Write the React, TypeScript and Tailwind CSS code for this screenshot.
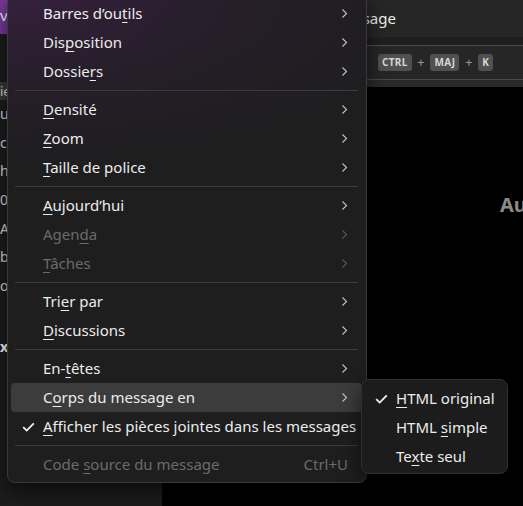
import clsx from "clsx";

type ItemProps = {
  label: string;
  k: number;
  disabled?: boolean;
  sub?: boolean;
  shortcut?: string;
  check?: boolean;
  active?: boolean;
};

function Chevron({ dim }: { dim?: boolean }) {
  return (
    <svg width="7" height="11" viewBox="0 0 7 11" fill="none" className="shrink-0">
      <path d="M1.5 1.5l4 4-4 4" stroke={dim ? "#595959" : "#c4c4c4"} strokeWidth="1.1" />
    </svg>
  );
}

function Check() {
  return (
    <svg width="13" height="10" viewBox="0 0 13 10" fill="none">
      <path d="M1.2 5.2l3.5 3.4L11.8 1.3" stroke="#f2f2f2" strokeWidth="1.8" />
    </svg>
  );
}

// underline the access key letter
function Label({ text, k }: { text: string; k: number }) {
  return (
    <span className="whitespace-nowrap">
      {text.slice(0, k)}
      <span className="underline decoration-1 underline-offset-[3px]">{text[k]}</span>
      {text.slice(k + 1)}
    </span>
  );
}

function Item({ label, k, disabled, sub, shortcut, check, active }: ItemProps) {
  return (
    <div
      className={clsx(
        "flex h-[29px] items-center rounded-[4px] pl-[11px] pr-[14px]",
        active && "bg-[#3c3c3c]",
        disabled ? "text-[#6b6b6b]" : "text-[#ececec]"
      )}
    >
      <div className="flex w-[21px] shrink-0 items-center">{check && <Check />}</div>
      <div className="flex-1">
        <Label text={label} k={k} />
      </div>
      {sub && <Chevron dim={disabled} />}
      {shortcut && <span className="text-[#6b6b6b]">{shortcut}</span>}
    </div>
  );
}

function Sep() {
  return <div className="mx-[4px] my-[4px] h-px bg-[#3b3b3b]" />;
}

function Key({ children }: { children: string }) {
  return (
    <span className="flex h-[17px] items-center rounded-[3px] bg-[#505050] px-[4px] text-[10px] font-bold tracking-[0.3px] text-[#d6d6d6]">
      {children}
    </span>
  );
}

export default function App() {
  const letters = ["u", "c", "h", "0", "A", "b", "oc"];
  return (
    <div className="relative h-[506px] w-[523px] overflow-hidden bg-black font-['Noto_Sans',sans-serif] text-[15px]">
      <div className="flex h-full">
        <aside className="flex w-[162px] shrink-0 flex-col bg-[#1c1c1c] text-[#d8d8d8]">
          <div className="h-[34px] bg-[#773b9d] text-[15px] leading-[30px] text-white">v</div>
          <div className="h-[48px]" />
          <div className="h-[18px] border-t border-[#3a3a3a] bg-[#393939] text-[13px] leading-[17px] text-[#e0dccf]">
            ie
          </div>
          {letters.map((l) => (
            <div key={l} className="h-[28.7px] text-[14px] leading-[28.7px]">
              {l}
            </div>
          ))}
          <div className="mt-[35px] text-[14px] font-bold text-white">x</div>
        </aside>

        <main className="flex flex-1 flex-col">
          <div className="flex h-[37px] items-center bg-[#262626] pl-[171px] text-[#ededed]">message</div>
          <div className="h-[8px] bg-[#1f1f1f]" />
          <div className="flex h-[34px] items-center gap-[6px] border-t border-[#4d4d4d] bg-[#262626] pl-[216px] text-[12px] text-[#9a9a9a]">
            <Key>CTRL</Key>
            <span>+</span>
            <Key>MAJ</Key>
            <span>+</span>
            <Key>K</Key>
          </div>
          <div className="h-[8px] border-t border-[#4a4a4a] bg-[#2a2a2a]" />
          <div className="flex-1 bg-black pl-[338px] pt-[103px]">
            <span className="whitespace-nowrap text-[20px] font-bold text-[#8a8a8a]">Au</span>
          </div>
        </main>
      </div>

      {/* main menu */}
      <div className="absolute left-[7px] top-[-5px] w-[360px] rounded-[8px] border border-[#3a3a3a] bg-[radial-gradient(ellipse_430px_170px_at_0%_0%,#35203c_0%,#251e28_55%,#1e1e1f_100%)] pb-[3px] pl-[3px] pr-[4px] pt-[3px] shadow-[0_8px_20px_rgba(0,0,0,0.6)]">
        <Item label="Barres d’outils" k={11} sub />
        <Item label="Disposition" k={3} sub />
        <Item label="Dossiers" k={6} sub />
        <Sep />
        <Item label="Densité" k={0} sub />
        <Item label="Zoom" k={0} sub />
        <Item label="Taille de police" k={0} sub />
        <Sep />
        <Item label="Aujourd’hui" k={0} sub />
        <Item label="Agenda" k={4} sub disabled />
        <Item label="Tâches" k={0} sub disabled />
        <Sep />
        <Item label="Trier par" k={3} sub />
        <Item label="Discussions" k={0} sub />
        <Sep />
        <Item label="En-têtes" k={3} sub />
        <Item label="Corps du message en" k={1} sub active />
        <Item label="Afficher les pièces jointes dans les messages" k={0} check />
        <Sep />
        <Item label="Code source du message" k={5} shortcut="Ctrl+U" disabled />
      </div>

      {/* submenu */}
      <div className="absolute left-[361px] top-[379px] w-[147px] rounded-[8px] border border-[#303030] bg-[#1c1c1c] pb-[2px] pt-[4px] text-[#ececec] shadow-[0_8px_20px_rgba(0,0,0,0.6)]">
        <div className="flex h-[29px] items-center pl-[13px]">
          <div className="w-[21px]">
            <Check />
          </div>
          <Label text="HTML original" k={0} />
        </div>
        <div className="flex h-[29px] items-center pl-[34px]">
          <Label text="HTML simple" k={5} />
        </div>
        <div className="flex h-[29px] items-center pl-[34px]">
          <Label text="Texte seul" k={2} />
        </div>
      </div>
    </div>
  );
}
